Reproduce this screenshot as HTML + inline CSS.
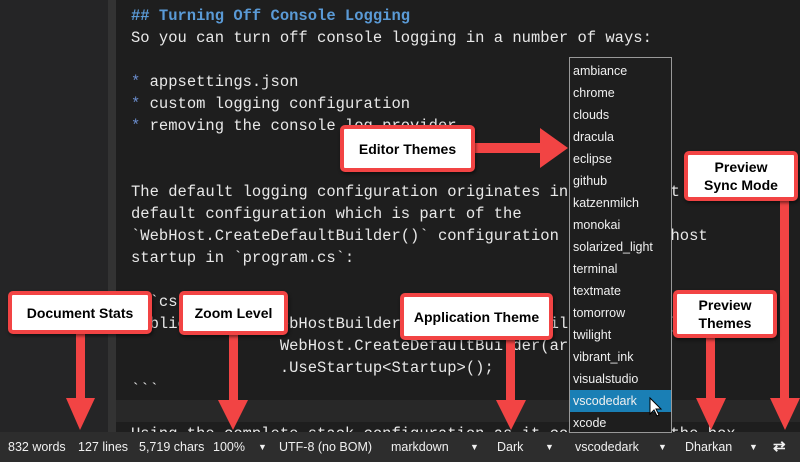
<!DOCTYPE html>
<html><head><meta charset="utf-8"><style>
*{margin:0;padding:0;box-sizing:border-box}
body{width:800px;height:462px;overflow:hidden;background:#1e1e1e;position:relative;font-family:"Liberation Sans",sans-serif}
.gut{position:absolute;left:0;top:0;width:108px;height:432px;background:#252526}
.strip{position:absolute;left:108px;top:0;width:8px;height:432px;background:#333}
.cur{position:absolute;left:116px;top:400px;width:684px;height:22px;background:#282828}
.code{position:absolute;left:131px;font-family:"Liberation Mono",monospace;font-size:15.5px;color:#e8e8e8;white-space:pre;line-height:22px}
.h{color:#5a9ad6;font-weight:bold}
.b{color:#6c8fd0}
.status{position:absolute;left:0;top:432px;width:800px;height:30px;background:#2d2d2d;color:#f0f0f0;font-size:12.5px}
.status span{position:absolute;top:8px;white-space:nowrap}
.dd{position:absolute;left:569px;top:57px;width:103px;height:376px;background:#1e1e1e;border:1px solid #999}
.dd div{height:22px;line-height:22px;padding-left:3px;color:#f0f0f0;font-size:12.5px}
.dd .sel{background:#1a7fb5}
.box{position:absolute;background:#fff;border:4px solid #f24444;border-radius:5px;box-shadow:1px 2px 3px rgba(0,0,0,.5);font-weight:bold;font-size:14px;color:#000;display:flex;align-items:center;justify-content:center;text-align:center;line-height:18px}
</style></head><body>
<div class="gut"></div><div class="strip"></div><div class="cur"></div>
<div class="code" style="top:5px"><span class="h">## Turning Off Console Logging</span>
So you can turn off console logging in a number of ways:

<span class="b">*</span> appsettings.json
<span class="b">*</span> custom logging configuration
<span class="b">*</span> removing the console log provider


The default logging configuration originates in the default ASP.NET
default configuration which is part of the
`WebHost.CreateDefaultBuilder()` configuration in ASP.NET host
startup in `program.cs`:

&#96;&#96;&#96;cs
public static IWebHostBuilder CreateWebHostBuilder(string[] args) =&gt;
                WebHost.CreateDefaultBuilder(args)
                .UseStartup&lt;Startup&gt;();
&#96;&#96;&#96;

Using the complete stack configuration as it comes out of the box</div>
<div class="status">
<span style="left:8px">832 words</span><span style="left:78px">127 lines</span><span style="left:139px">5,719 chars</span>
<span style="left:213px">100%</span><span style="left:258px;font-size:9px;top:10px">▼</span>
<span style="left:279px">UTF-8 (no BOM)</span><span style="left:391px">markdown</span><span style="left:470px;font-size:9px;top:10px">▼</span>
<span style="left:497px">Dark</span><span style="left:545px;font-size:9px;top:10px">▼</span>
<span style="left:575px">vscodedark</span><span style="left:658px;font-size:9px;top:10px">▼</span>
<span style="left:685px">Dharkan</span><span style="left:749px;font-size:9px;top:10px">▼</span>
<span style="left:773px;font-size:15px;top:5px;font-weight:bold">⇄</span>
</div>
<div class="dd">
<div style="margin-top:2px">ambiance</div><div>chrome</div><div>clouds</div><div>dracula</div><div>eclipse</div><div>github</div><div>katzenmilch</div><div>monokai</div><div>solarized_light</div><div>terminal</div><div>textmate</div><div>tomorrow</div><div>twilight</div><div>vibrant_ink</div><div>visualstudio</div><div class="sel">vscodedark</div><div>xcode</div>
</div>
<svg style="position:absolute;left:0;top:0" width="800" height="462">
<g fill="#f24444">
<rect x="470" y="143" width="75" height="10"/><polygon points="540,128 568,148 540,168"/>
<rect x="76" y="330" width="9" height="72"/><polygon points="66,398 95,398 80,430"/>
<rect x="229" y="330" width="9" height="72"/><polygon points="218,400 248,400 233,430"/>
<rect x="506" y="335" width="9" height="67"/><polygon points="496,400 526,400 511,430"/>
<rect x="706" y="335" width="9" height="67"/><polygon points="696,398 726,398 711,430"/>
<rect x="780" y="198" width="9" height="204"/><polygon points="770,398 800,398 785,430"/>
</g>
<polygon points="650,398 650,414 654,410 657,416 659,415 656,409 661,409" fill="#fff" stroke="#000" stroke-width="1"/>
</svg>
<div class="box" style="left:340px;top:125px;width:135px;height:47px">Editor Themes</div>
<div class="box" style="left:684px;top:151px;width:114px;height:50px">Preview<br>Sync Mode</div>
<div class="box" style="left:8px;top:291px;width:144px;height:43px">Document Stats</div>
<div class="box" style="left:179px;top:291px;width:109px;height:44px">Zoom Level</div>
<div class="box" style="left:400px;top:293px;width:153px;height:47px">Application Theme</div>
<div class="box" style="left:673px;top:290px;width:104px;height:48px">Preview<br>Themes</div>
</body></html>
